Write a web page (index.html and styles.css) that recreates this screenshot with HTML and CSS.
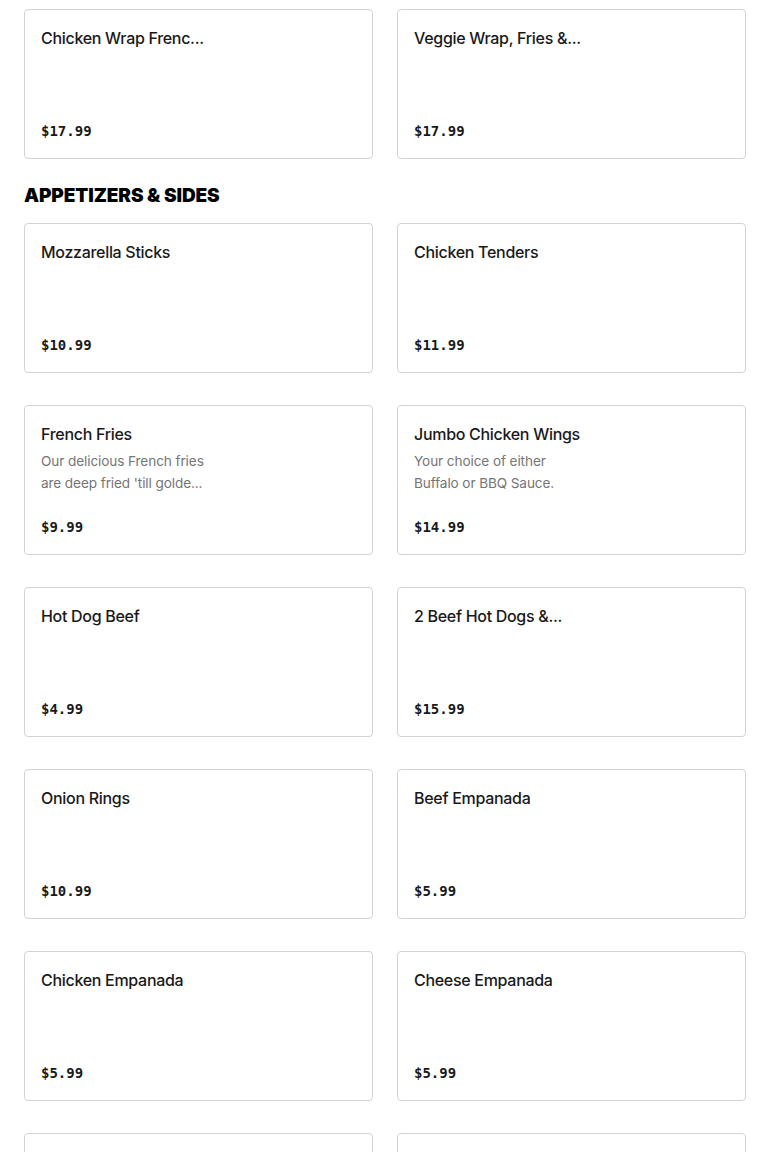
FILE: index.html
```html
<!DOCTYPE html>
<html>
<head>
<meta charset="utf-8">
<link rel="stylesheet" href="styles.css">
</head>
<body>
<div class="page">
  <div class="grid">
    <div class="card"><div class="title">Chicken Wrap Frenc...</div><div class="price">$17.99</div></div>
    <div class="card"><div class="title">Veggie Wrap, Fries &amp;...</div><div class="price">$17.99</div></div>
  </div>
  <h2 class="section">APPETIZERS &amp; SIDES</h2>
  <div class="grid">
    <div class="card"><div class="title">Mozzarella Sticks</div><div class="price">$10.99</div></div>
    <div class="card"><div class="title">Chicken Tenders</div><div class="price">$11.99</div></div>
    <div class="card"><div class="title">French Fries</div><div class="desc"><span class="line">Our delicious French fries</span><span class="line">are deep fried 'till golde...</span></div><div class="price">$9.99</div></div>
    <div class="card"><div class="title">Jumbo Chicken Wings</div><div class="desc"><span class="line">Your choice of either</span><span class="line">Buffalo or BBQ Sauce.</span></div><div class="price">$14.99</div></div>
    <div class="card"><div class="title">Hot Dog Beef</div><div class="price">$4.99</div></div>
    <div class="card"><div class="title">2 Beef Hot Dogs &amp;...</div><div class="price">$15.99</div></div>
    <div class="card"><div class="title">Onion Rings</div><div class="price">$10.99</div></div>
    <div class="card"><div class="title">Beef Empanada</div><div class="price">$5.99</div></div>
    <div class="card"><div class="title">Chicken Empanada</div><div class="price">$5.99</div></div>
    <div class="card"><div class="title">Cheese Empanada</div><div class="price">$5.99</div></div>
    <div class="card"></div>
    <div class="card"></div>
  </div>
</div>
</body>
</html>
```
FILE: styles.css
```css
html, body {
  margin: 0;
  padding: 0;
  background: #ffffff;
}
.page {
  padding: 9px 24px 0 24px;
  font-family: Inter, "Liberation Sans", sans-serif;
  color: #191919;
}
.grid {
  display: grid;
  grid-template-columns: 1fr 1fr;
  column-gap: 24px;
  row-gap: 32px;
}
.card {
  box-sizing: border-box;
  height: 150px;
  border: 1px solid #d3d3d3;
  border-radius: 4px;
  padding: 16px;
  display: flex;
  flex-direction: column;
  background: #fff;
}
.title {
  font-size: 16px;
  line-height: 24px;
  font-weight: 500;
  color: #191919;
  letter-spacing: -0.3px;
}
.desc {
  margin-top: 4px;
  font-size: 13.6px;
  line-height: 22px;
  color: #767676;
  letter-spacing: -0.1px;
}
.line {
  display: block;
}
.price {
  margin-top: auto;
  font-family: "DejaVu Sans Mono", "Liberation Mono", monospace;
  font-weight: bold;
  font-size: 14px;
  line-height: 22px;
  color: #191919;
}
.section {
  margin: 25px 0 15px 0;
  font-size: 19px;
  line-height: 24px;
  font-weight: 900;
  color: #000;
  letter-spacing: -0.1px;
}
```
